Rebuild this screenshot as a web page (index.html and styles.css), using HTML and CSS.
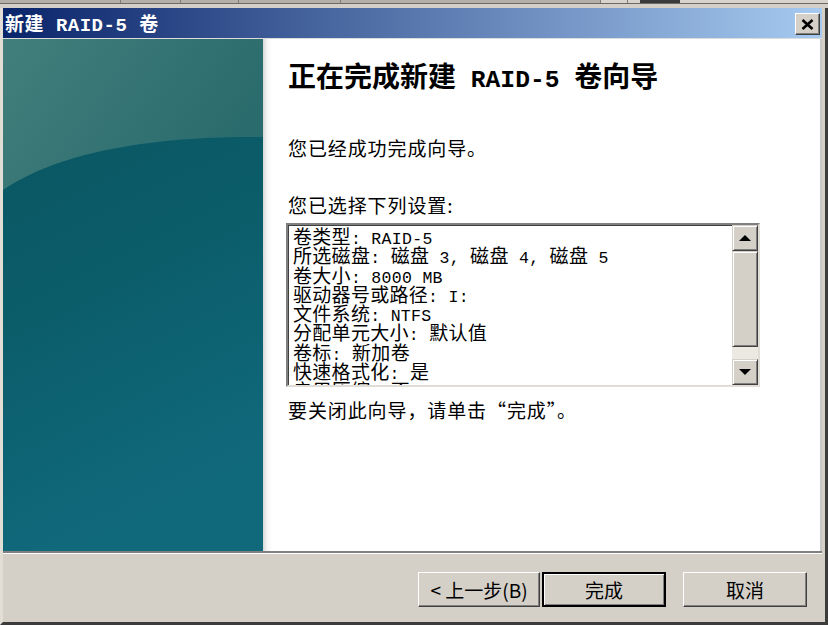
FILE: index.html
```html
<!DOCTYPE html>
<html lang="zh-CN">
<head>
    <meta charset="UTF-8">
    <title>新建 RAID-5 卷</title>
    <link rel="stylesheet" href="styles.css">
</head>
<body>
    <div class="strip">
        <div class="cell w120"></div>
        <div class="cell w60"></div>
        <div class="cell w58"></div>
        <div class="cell w102"></div>
        <div class="cell w260"></div>
        <div class="cell w27"></div>
        <div class="cell rest"><span class="blob"></span></div>
    </div>

    <div class="window">
        <div class="titlebar">
            <span class="title">新建 RAID-5 卷</span>
            <button class="close" title="关闭">
                <svg width="13" height="11" viewBox="0 0 13 11">
                    <path d="M1.5 1 L11.5 10 M11.5 1 L1.5 10" stroke="#000" stroke-width="2.6" fill="none"/>
                </svg>
            </button>
        </div>

        <div class="main">
            <div class="side">
                <svg width="260" height="512" viewBox="0 0 260 512">
                    <defs>
                        <linearGradient id="deep" x1="0" y1="0" x2="0.25" y2="1">
                            <stop offset="0" stop-color="#0a5460"/>
                            <stop offset="0.5" stop-color="#0b5c69"/>
                            <stop offset="1" stop-color="#10697b"/>
                        </linearGradient>
                        <linearGradient id="glow" x1="0" y1="0" x2="1" y2="0.4">
                            <stop offset="0" stop-color="#427f7c"/>
                            <stop offset="1" stop-color="#2a6b6d"/>
                        </linearGradient>
                    </defs>
                    <rect width="260" height="512" fill="url(#deep)"/>
                    <path d="M0 0 H260 V98 C190 97 70 103 0 151 Z" fill="url(#glow)"/>
                </svg>
            </div>

            <div class="content">
                <h1 class="heading">正在完成新建<span class="en"> RAID-5 </span>卷向导</h1>
                <p class="text first">您已经成功完成向导。</p>
                <p class="text label">您已选择下列设置:</p>

                <div class="listbox">
                    <div class="lines">
                        <div>卷类型<span class="en">: RAID-5</span></div>
                        <div>所选磁盘<span class="en">: </span>磁盘<span class="en"> 3, </span>磁盘<span class="en"> 4, </span>磁盘<span class="en"> 5</span></div>
                        <div>卷大小<span class="en">: 8000 MB</span></div>
                        <div>驱动器号或路径<span class="en">: I:</span></div>
                        <div>文件系统<span class="en">: NTFS</span></div>
                        <div>分配单元大小<span class="en">: </span>默认值</div>
                        <div>卷标<span class="en">: </span>新加卷</div>
                        <div>快速格式化<span class="en">: </span>是</div>
                        <div>启用压缩<span class="en">: </span>否</div>
                    </div>
                    <div class="scrollbar">
                        <div class="sbtn"><span class="arrow up"></span></div>
                        <div class="thumb"></div>
                        <div class="track"></div>
                        <div class="sbtn"><span class="arrow down"></span></div>
                    </div>
                </div>

                <p class="text closing">要关闭此向导，请单击“完成”。</p>
            </div>
        </div>

        <div class="footer">
            <button class="btn back">&lt; 上一步(<u>B</u>)</button>
            <button class="btn finish">完成</button>
            <button class="btn cancel">取消</button>
        </div>
    </div>
</body>
</html>
```

FILE: styles.css
```css
html, body {
    margin: 0;
    padding: 0;
}
body {
    width: 828px;
    height: 625px;
    overflow: hidden;
    background-color: #d4d0c8;
    font-family: "Noto Sans CJK SC", sans-serif;
    color: #000;
}

/* taskbar-ish strip above the dialog */
.strip {
    height: 3px;
    display: flex;
    background-color: #b4b0a8;
    border-bottom: 1px solid #6c6a66;
    margin-bottom: 4px;
}
.cell {
    border-right: 1px solid #807c76;
}
.w120 { width: 120px; }
.w60 { width: 59px; }
.w58 { width: 57px; }
.w102 { width: 101px; }
.w260 { width: 259px; }
.w27 { width: 26px; background-color: #d8d4cc; }
.rest {
    flex: 1;
    border-right: none;
    background-color: #d8d4cc;
}
.blob {
    display: block;
    width: 40px;
    height: 3px;
    margin-left: 12px;
    background-color: #3a3a3a;
}

.window {
    height: 614px;
    border-left: 3px solid #e2ded6;
    border-right: 3px solid #3c3c3c;
    border-bottom: 3px solid #3c3c3c;
    padding-right: 3px;
    display: flex;
    flex-direction: column;
}

.titlebar {
    height: 30px;
    display: flex;
    align-items: center;
    justify-content: space-between;
    background: linear-gradient(to right, #0a246a, #a6caf0);
    border-bottom: 1px solid #dcdcdc;
    padding: 0 2px 0 2px;
}
.title {
    font-family: "Liberation Mono", "Noto Sans CJK SC", monospace;
    font-weight: bold;
    font-size: 19px;
    color: #fff;
    letter-spacing: 0.5px;
}
.close {
    width: 25px;
    height: 22px;
    padding: 0;
    margin-top: 2px;
    display: flex;
    align-items: center;
    justify-content: center;
    background-color: #d4d0c8;
    border: 1px solid;
    border-color: #fff #404040 #404040 #fff;
    box-shadow: inset -1px -1px #808080;
}

.main {
    height: 512px;
    display: flex;
}
.side {
    width: 260px;
    height: 512px;
}
.side svg {
    display: block;
}
.content {
    flex: 1;
    background: linear-gradient(to right, #d6d6d6 0, #f4f4f4 4px, #fff 9px);
    padding: 19px 0 0 25px;
    border-right: 2px solid #c8c8c8;
}

.heading {
    margin: 0;
    font-size: 28px;
    line-height: 34px;
    font-weight: bold;
}
.en {
    font-family: "Liberation Mono", monospace;
    font-size: 0.87em;
    line-height: 0;
    white-space: pre;
}
.heading .en {
    font-size: 0.88em;
}
.text {
    margin: 0;
    font-size: 19px;
    line-height: 22px;
    letter-spacing: 0.9px;
}
.first { margin-top: 45px; }
.label { margin-top: 35px; }
.closing { margin-top: 12px; }

.listbox {
    margin: 7px 0 0 -2px;
    width: 470px;
    height: 160px;
    display: flex;
    background-color: #fff;
    border: 2px solid;
    border-color: #808080 #e0ddd6 #e0ddd6 #808080;
    box-shadow: inset 1px 1px #404040;
}
.lines {
    flex: 1;
    overflow: hidden;
    padding: 1px 0 0 5px;
    font-size: 19px;
    line-height: 19.3px;
    letter-spacing: 0.3px;
    white-space: nowrap;
}
.scrollbar {
    width: 26px;
    display: flex;
    flex-direction: column;
    background-color: #ece9e2;
}
.sbtn, .thumb {
    box-sizing: border-box;
    background-color: #d4d0c8;
    border: 1px solid;
    border-color: #d4d0c8 #404040 #404040 #d4d0c8;
    box-shadow: inset 1px 1px #fff, inset -1px -1px #808080;
}
.sbtn {
    height: 26px;
    display: flex;
    align-items: center;
    justify-content: center;
}
.thumb {
    height: 96px;
}
.track {
    flex: 1;
}
.arrow {
    width: 0;
    height: 0;
    border-left: 6px solid transparent;
    border-right: 6px solid transparent;
}
.arrow.up {
    border-bottom: 6px solid #000;
}
.arrow.down {
    border-top: 6px solid #000;
}

.footer {
    flex: 1;
    border-top: 2px solid #808080;
    box-shadow: inset 0 1px #fff;
    display: flex;
    justify-content: flex-end;
    align-items: flex-start;
    padding: 19px 15px 0 0;
}
.btn {
    height: 35px;
    width: 124px;
    padding: 0;
    font-family: "Noto Sans CJK SC", sans-serif;
    font-size: 19px;
    color: #000;
    background-color: #d4d0c8;
    border: 1px solid;
    border-color: #fff #404040 #404040 #fff;
    box-shadow: inset -1px -1px #808080;
}
.back {
    width: 122px;
    margin-right: 2px;
}
.finish {
    border: 2px solid #000;
    box-shadow: inset 1px 1px #fff, inset -1px -1px #808080;
    margin-right: 17px;
}
.btn u {
    text-decoration: none;
}
```
